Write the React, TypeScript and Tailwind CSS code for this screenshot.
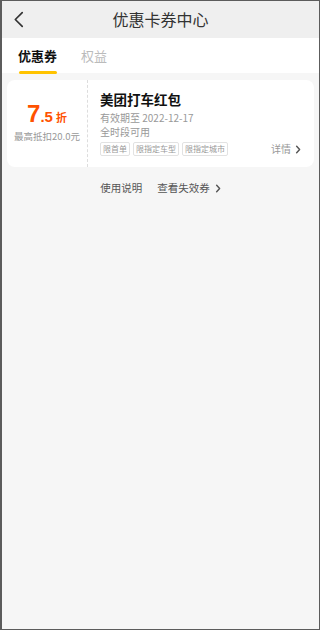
import React from "react";

const font = { fontFamily: '"Noto Sans CJK SC", "Noto Sans", sans-serif' };
const numFont = { fontFamily: '"Liberation Sans", Arial, "Noto Sans CJK SC", sans-serif' };

function Chevron({ className }: { className?: string }) {
  return (
    <svg viewBox="0 0 10 16" className={className} fill="none" stroke="currentColor" strokeWidth="1.6" strokeLinecap="round" strokeLinejoin="round">
      <path d="M8.5 1.5 L2 8 L8.5 14.5" />
    </svg>
  );
}

function SmallArrow({ className }: { className?: string }) {
  return (
    <svg viewBox="0 0 6 10" className={className} fill="none" stroke="currentColor" strokeWidth="1.6" strokeLinecap="round" strokeLinejoin="round">
      <path d="M1.5 1.5 L4.8 5 L1.5 8.5" />
    </svg>
  );
}

export default function App() {
  return (
    <div
      style={font}
      className="w-[320px] h-[630px] box-border border-t border-r border-b border-l-2 border-[#5c5c5c] bg-[#f6f6f6] flex flex-col overflow-hidden"
    >
      {/* Header */}
      <div className="h-[37px] bg-[#efefef] flex items-center relative shrink-0">
        <Chevron className="absolute left-[11px] top-[10px] w-[11px] h-[17px] text-[#333]" />
        <div className="flex-1 text-center text-[16px] leading-[20px] text-[#333] -mt-[1px]">优惠卡券中心</div>
      </div>
      {/* Tabs */}
      <div className="h-[35px] bg-white flex items-start shrink-0 pl-[16px]">
        <div className="flex flex-col items-center pt-[9px]">
          <span className="block text-[13px] leading-[18px] font-bold text-[#111]">优惠券</span>
          <span className="block mt-[6px] w-[38px] h-[3px] rounded-full bg-[#ffc300]" />
        </div>
        <div className="pt-[9px] ml-[24px]">
          <span className="block text-[13px] leading-[18px] text-[#bbbbbb]">权益</span>
        </div>
      </div>
      {/* Content */}
      <div className="flex-1 px-[5px] pt-[7px]">
        <div className="flex h-[87px] rounded-[8px] bg-white">
          <div className="w-[81px] shrink-0 flex flex-col items-center justify-center border-r border-dashed border-[#dddddd]">
            <div className="flex items-baseline text-[#ff5200] font-bold leading-[24px] -mt-[3px]">
              <span style={numFont} className="text-[24px]">7</span>
              <span style={numFont} className="text-[15px]">.5</span>
              <span className="text-[11px] ml-[3px] leading-[16px]">折</span>
            </div>
            <div className="mt-[1px] text-[9.5px] leading-[13px] text-[#999]">最高抵扣20.0元</div>
          </div>
          <div className="flex-1 pl-[12px] pr-[13px] pt-[11px] flex flex-col">
            <div className="text-[13.5px] leading-[16px] font-bold text-[#111]">美团打车红包</div>
            <div className="mt-[4px] text-[10px] leading-[14px] text-[#999]">有效期至 2022-12-17</div>
            <div className="text-[10px] leading-[14px] text-[#999]">全时段可用</div>
            <div className="mt-[3px] flex items-center">
              <div className="flex gap-[3px]">
                <span className="border border-[#e2e2e2] rounded-[2px] px-[2px] text-[8px] leading-[12px] text-[#999]">限首单</span>
                <span className="border border-[#e2e2e2] rounded-[2px] px-[2px] text-[8px] leading-[12px] text-[#999]">限指定车型</span>
                <span className="border border-[#e2e2e2] rounded-[2px] px-[2px] text-[8px] leading-[12px] text-[#999]">限指定城市</span>
              </div>
              <div className="ml-auto flex items-center text-[10px] text-[#999] leading-[14px]">
                <span>详情</span>
                <SmallArrow className="ml-[4px] w-[6px] h-[9px] text-[#555]" />
              </div>
            </div>
          </div>
        </div>
        <div className="mt-[14px] flex justify-center items-center text-[10.5px] leading-[14px] text-[#555]">
          <span>使用说明</span>
          <span className="ml-[15px]">查看失效券</span>
          <SmallArrow className="ml-[5px] w-[6px] h-[9px] text-[#555]" />
        </div>
      </div>
    </div>
  );
}
